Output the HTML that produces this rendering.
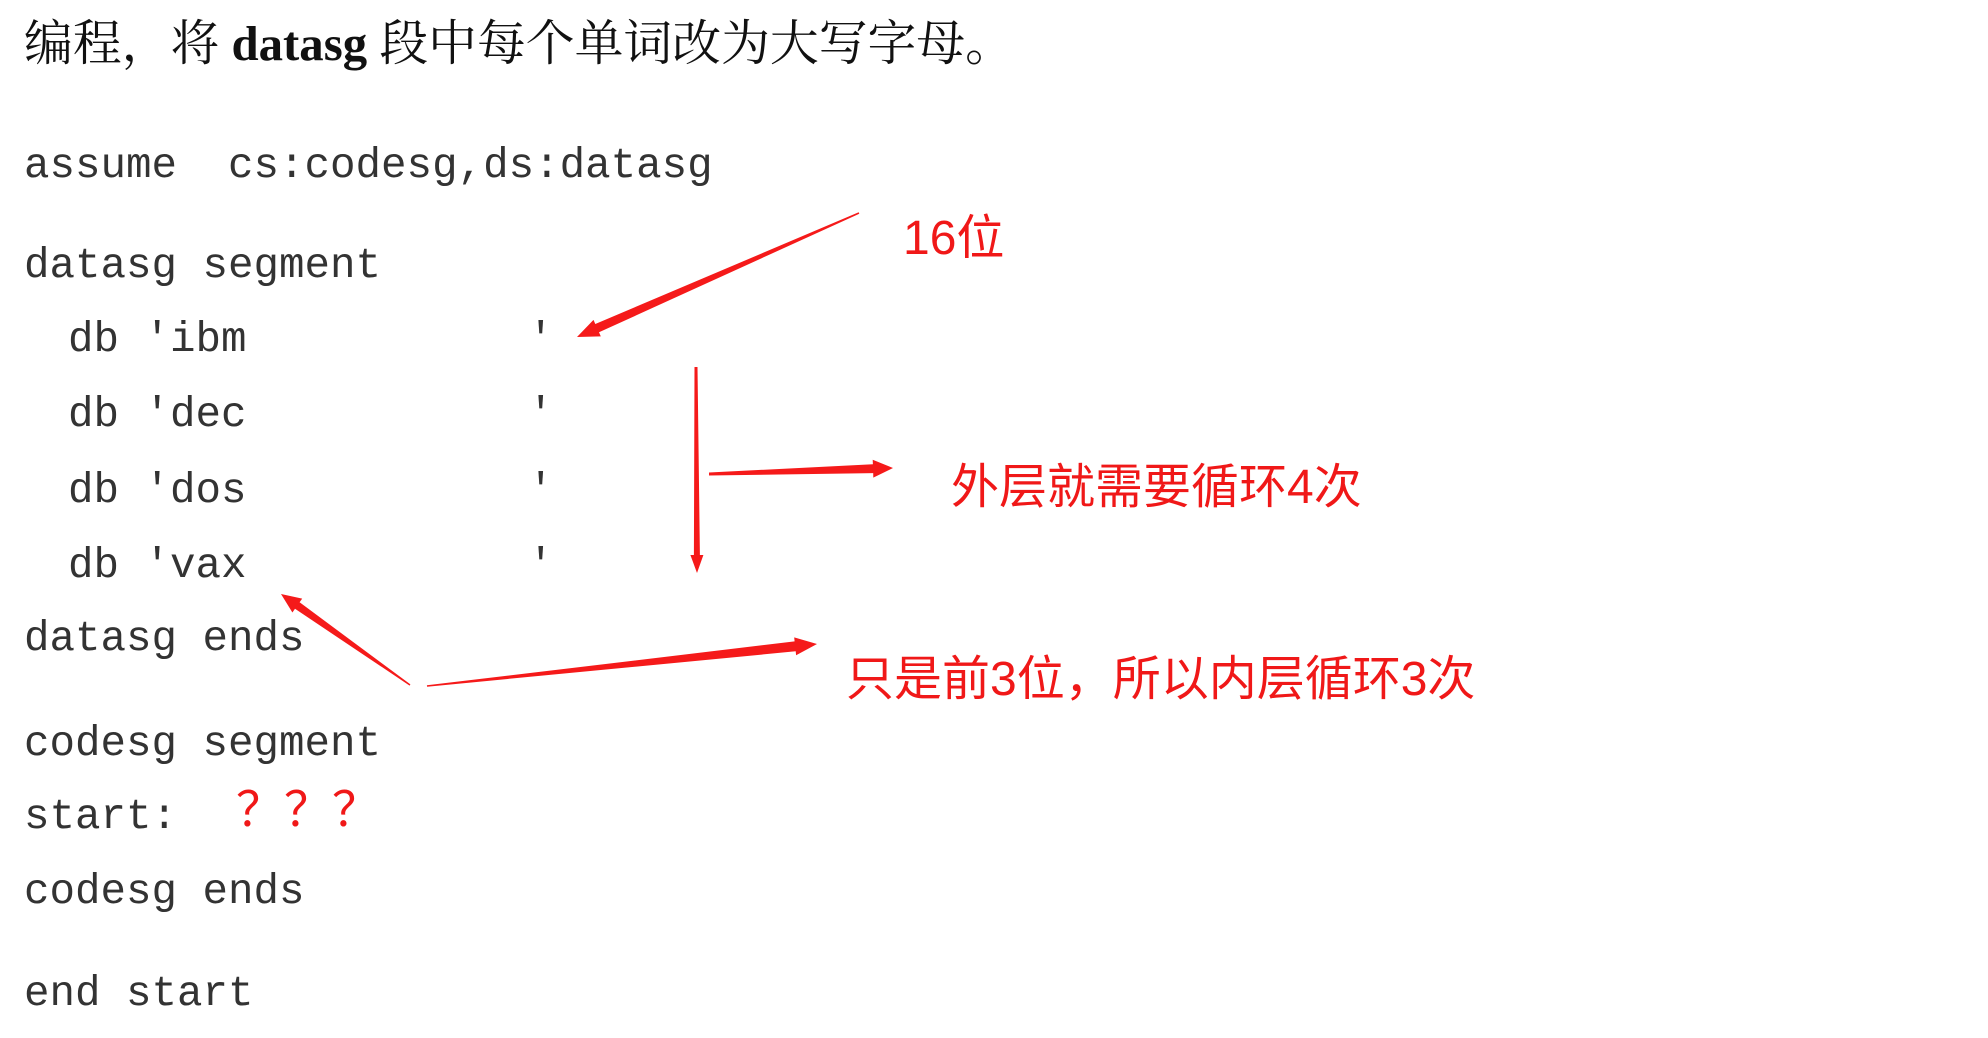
<!DOCTYPE html>
<html><head><meta charset="utf-8"><style>
html,body{margin:0;padding:0;background:#fff;width:1988px;height:1038px;overflow:hidden}
svg{position:absolute;left:0;top:0}
.code{font-family:"Liberation Mono","Courier New",monospace;font-size:42.5px;fill:#333;white-space:pre}
.red{font-family:"Liberation Sans","Noto Sans CJK SC",sans-serif;fill:#f01818;font-size:48px}
.title{font-family:"Liberation Serif","Noto Serif CJK SC",serif;font-size:49px;fill:#111}
</style></head><body>
<svg id="s" width="1988" height="1038" xmlns="http://www.w3.org/2000/svg" xml:space="preserve">
<text class="title" x="24" y="60" textLength="990" lengthAdjust="spacingAndGlyphs">编程，将 <tspan font-weight="bold">datasg</tspan> 段中每个单词改为大写字母。</text>
<text class="code" x="24" y="177">assume&#160;&#160;cs:codesg,ds:datasg</text>
<text class="code" x="24" y="277">datasg segment</text>
<text class="code" x="68" y="351">db 'ibm</text>
<text class="code" x="68" y="426">db 'dec</text>
<text class="code" x="68" y="502">db 'dos</text>
<text class="code" x="68" y="577">db 'vax</text>
<text class="code" x="528" y="351">'</text>
<text class="code" x="528" y="426">'</text>
<text class="code" x="528" y="502">'</text>
<text class="code" x="528" y="577">'</text>
<text class="code" x="24" y="650">datasg ends</text>
<text class="code" x="24" y="755">codesg segment</text>
<text class="code" x="24" y="828">start:</text>
<text class="code" x="24" y="903">codesg ends</text>
<text class="code" x="24" y="1005">end start</text>
<text class="red" x="236" y="826" font-size="46">？？？</text>
<text class="red" x="903" y="254">16位</text>
<text class="red" x="951" y="503">外层就需要循环4次</text>
<text class="red" x="846" y="695">只是前3位，所以内层循环3次</text>
<g id="arrows" fill="#f51a1a"></g>
</svg>
<script>
function arrow(x1,y1,x2,y2,w0,w1,hl,hw){
 var dx=x2-x1,dy=y2-y1,L=Math.hypot(dx,dy),ux=dx/L,uy=dy/L,nx=-uy,ny=ux;
 var bx=x2-ux*hl,by=y2-uy*hl;
 var p=[[x1+nx*w0/2,y1+ny*w0/2],[bx+nx*w1/2,by+ny*w1/2],[bx+nx*hw/2,by+ny*hw/2],[x2,y2],
 [bx-nx*hw/2,by-ny*hw/2],[bx-nx*w1/2,by-ny*w1/2],[x1-nx*w0/2,y1-ny*w0/2]];
 var e=document.createElementNS("http://www.w3.org/2000/svg","polygon");
 e.setAttribute("points",p.map(function(q){return q[0].toFixed(1)+","+q[1].toFixed(1)}).join(" "));
 document.getElementById("arrows").appendChild(e);
}
arrow(859,213,577,337,1.5,9,22,18);
arrow(696,367,697,573,3,6,18,13);
arrow(709,474,893,468,3,9,20,18);
arrow(410,685,281,594,1.5,8,20,17);
arrow(427,686,817,644,1.5,10,22,18);
</script>
</body></html>
